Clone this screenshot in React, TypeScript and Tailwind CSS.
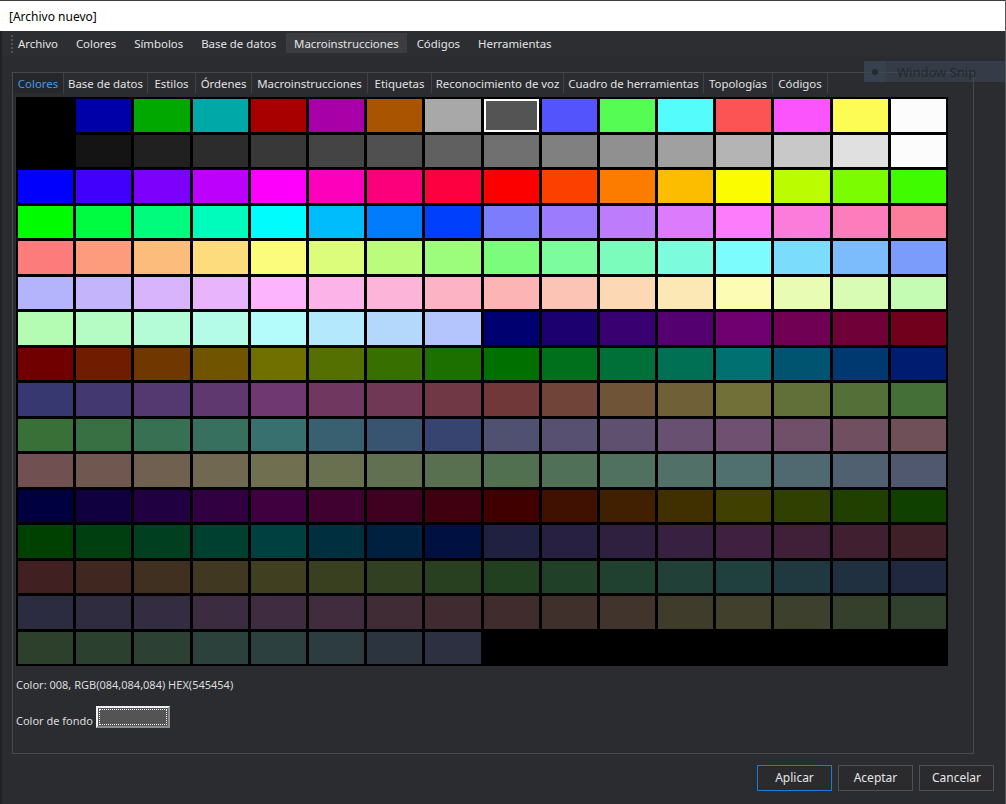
import React from "react";

type RGB = [number, number, number];

function ring(s: number[]): RGB[] {
  const [lo, a, b, c, hi] = s;
  return [
    [lo, lo, hi], [a, lo, hi], [b, lo, hi], [c, lo, hi],
    [hi, lo, hi], [hi, lo, c], [hi, lo, b], [hi, lo, a],
    [hi, lo, lo], [hi, a, lo], [hi, b, lo], [hi, c, lo],
    [hi, hi, lo], [c, hi, lo], [b, hi, lo], [a, hi, lo],
    [lo, hi, lo], [lo, hi, a], [lo, hi, b], [lo, hi, c],
    [lo, hi, hi], [lo, c, hi], [lo, b, hi], [lo, a, hi],
  ];
}

function buildPalette(): string[] {
  const out: RGB[] = [
    [0, 0, 0], [0, 0, 42], [0, 42, 0], [0, 42, 42], [42, 0, 0], [42, 0, 42], [42, 21, 0], [42, 42, 42],
    [21, 21, 21], [21, 21, 63], [21, 63, 21], [21, 63, 63], [63, 21, 21], [63, 21, 63], [63, 63, 21], [63, 63, 63],
  ];
  [0, 5, 8, 11, 14, 17, 20, 24, 28, 32, 36, 40, 45, 50, 56, 63].forEach((g) => out.push([g, g, g]));
  const groups = [
    [0, 16, 31, 47, 63], [31, 39, 47, 55, 63], [45, 49, 54, 58, 63],
    [0, 7, 14, 21, 28], [14, 17, 21, 24, 28], [20, 22, 24, 26, 28],
    [0, 4, 8, 12, 16], [8, 10, 12, 14, 16], [11, 12, 13, 15, 16],
  ];
  groups.forEach((g) => ring(g).forEach((c) => out.push(c)));
  for (let i = 0; i < 8; i++) out.push([0, 0, 0]);
  return out.map(([r, g, b]) => `rgb(${r * 4},${g * 4},${b * 4})`);
}

const palette = buildPalette();

const menuItems = ["Archivo", "Colores", "Símbolos", "Base de datos", "Macroinstrucciones", "Códigos", "Herramientas"];

const tabs: { label: string; w: string }[] = [
  { label: "Colores", w: "w-[51px]" },
  { label: "Base de datos", w: "w-[84px]" },
  { label: "Estilos", w: "w-[48px]" },
  { label: "Órdenes", w: "w-[56px]" },
  { label: "Macroinstrucciones", w: "w-[116px]" },
  { label: "Etiquetas", w: "w-[64px]" },
  { label: "Reconocimiento de voz", w: "w-[132px]" },
  { label: "Cuadro de herramientas", w: "w-[140px]" },
  { label: "Topologías", w: "w-[69px]" },
  { label: "Códigos", w: "w-[55px]" },
];

export default function App() {
  return (
    <div className="relative w-[1006px] h-[804px] overflow-hidden flex flex-col bg-[#2a2c30] font-['Noto_Sans',sans-serif] text-[11.4px] leading-[16px] text-[#e4e4e4]">
      {/* Title bar */}
      <div className="h-[31px] shrink-0 bg-white border-t border-[#3c3c3c] border-r border-r-[#55585c] flex items-center pl-[9px] pt-[2px] text-[12px] text-black">
        [Archivo nuevo]
      </div>

      <div className="flex-1 flex flex-col border-l-2 border-[#1f2124] border-r border-r-[#55585c]">
        {/* Menu bar */}
        <div className="relative h-[26px] shrink-0 bg-[#2d2e32] flex items-start pt-[2px] pl-[8px] gap-[2px]">
          <div className="absolute left-[9px] top-[4px] h-[18px] border-l-2 border-dotted border-[#505256]" />
          {menuItems.map((m) => (
            <div
              key={m}
              className={
                "h-[20px] px-[8px] pt-[1px] flex items-center whitespace-nowrap " +
                (m === "Macroinstrucciones" ? "bg-[#3c3d41]" : "")
              }
            >
              {m}
            </div>
          ))}
        </div>

        {/* Tab control */}
        <div className="mt-[15px] ml-[10px] w-[962px] h-[682px] border border-[#46484c] flex flex-col">
          <div className="h-[20px] flex shrink-0">
            {tabs.map((t, i) => (
              <div
                key={t.label}
                className={
                  t.w +
                  " h-full flex items-center justify-center pt-[1px] whitespace-nowrap border-r border-[#404246] " +
                  (i === 0 ? "bg-[#25272a] text-[#3f9cec]" : "text-[#e2e2e2]")
                }
              >
                {t.label}
              </div>
            ))}
          </div>

          {/* Palette grid */}
          <div className="mt-[4px] ml-[3px] w-[932px] h-[569px] bg-black p-[2px] grid grid-cols-16 grid-rows-16 gap-[3px]">
            {palette.map((c, i) => (
              <div
                key={i}
                className={i === 8 ? "border-2 border-white" : ""}
                style={{ backgroundColor: c }}
              />
            ))}
          </div>

          <div className="mt-[11px] ml-[3px] text-[11px] text-[#dcdcdc] whitespace-nowrap">
            Color: 008, RGB(084,084,084) HEX(545454)
          </div>

          <div className="mt-[13px] ml-[3px] flex items-end h-[22px]">
            <span className="w-[80px] text-[11px] text-[#dcdcdc] leading-[14px] whitespace-nowrap">Color de fondo</span>
            <div className="w-[74px] h-[22px] border-2 border-t-[#f2f2f2] border-l-[#f2f2f2] border-r-[#8c8c8c] border-b-[#8c8c8c] bg-[#545454] p-[1px]">
              <div className="w-full h-full border border-dotted border-white" />
            </div>
          </div>
        </div>

        {/* Buttons */}
        <div className="mt-[11px] flex justify-end gap-[6px] pr-[11px]">
          <button className="w-[75px] h-[26px] border border-[#1a7ad4] bg-[#2b2b2e] text-[12px] text-[#e6e6e6]">Aplicar</button>
          <button className="w-[75px] h-[26px] border border-[#4e5054] bg-[#2b2b2e] text-[12px] text-[#e6e6e6]">Aceptar</button>
          <button className="w-[75px] h-[26px] border border-[#4e5054] bg-[#2b2b2e] text-[12px] text-[#e6e6e6]">Cancelar</button>
        </div>
      </div>

      {/* Window Snip overlay */}
      <div className="absolute left-[864px] top-[61px] w-[141px] h-[21px] bg-[#3e4858]/60 flex items-center">
        <div className="w-[22px] h-full flex items-center justify-center bg-[#3c4656]/40">
          <div className="w-[6px] h-[6px] rounded-full bg-[#252a31]" />
        </div>
        <span className="ml-[11px] text-[13px] text-[#24282e]">Window Snip</span>
      </div>
    </div>
  );
}
